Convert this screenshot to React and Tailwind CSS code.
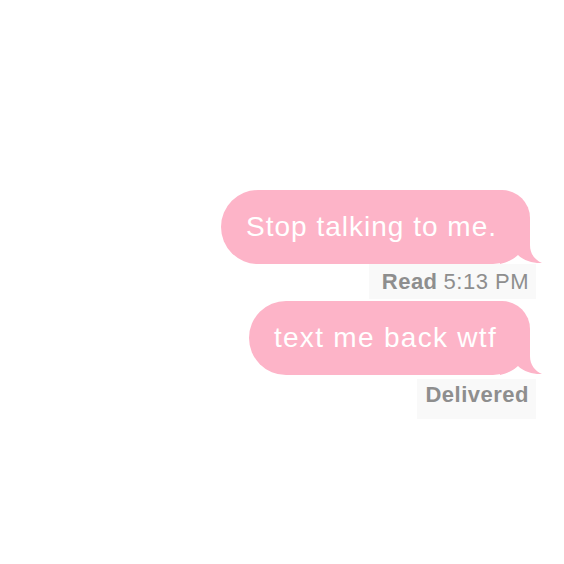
import React from "react";

const font = { fontFamily: '"Liberation Sans", Arial, sans-serif' };

function Tail() {
  return (
    <svg
      className="absolute right-[-12px] bottom-0"
      width="42"
      height="40"
      viewBox="0 0 42 40"
    >
      <path
        d="M0 3 L30 3 L30 21 C30 30 35 36 42 39 C34 39.5 24 37 18 31 C14 35 8 38 0 40 Z"
        fill="#fdb4c8"
      />
    </svg>
  );
}

function Bubble({ children, wide }) {
  return (
    <div className="relative h-[74px] flex items-center pl-[25px] pr-[33px] bg-[#fdb4c8] rounded-l-[37px] rounded-tr-[28px] rounded-br-[37px]">
      <span
        className={
          wide
            ? "text-[28px] leading-none tracking-[1.3px] text-white whitespace-nowrap"
            : "text-[28px] leading-none tracking-[1px] text-white whitespace-nowrap"
        }
      >
        {children}
      </span>
      <Tail />
    </div>
  );
}

export default function App() {
  return (
    <div className="w-[564px] h-[564px] bg-white overflow-hidden" style={font}>
      <div className="flex flex-col items-end pt-[190px] pr-[34px]">
        <Bubble>Stop talking to me.</Bubble>

        {/* Read receipt */}
        <div className="mr-[-6px] pl-[13px] pr-[7px] h-[35px] flex items-center bg-[#f9f9f9] text-[22px] leading-6 tracking-[0.5px] text-[#8e8e8e]">
          <span className="font-bold mr-[6px]">Read</span>
          <span>5:13 PM</span>
        </div>

        <div className="mt-[2px]">
          <Bubble wide>text me back wtf</Bubble>
        </div>

        <div className="mr-[-6px] mt-[4px] pl-[8px] pr-[7px] h-[40px] flex items-start pt-[4px] bg-[#f9f9f9] text-[22px] leading-6 tracking-[0.5px] text-[#8e8e8e]">
          <span className="font-bold">Delivered</span>
        </div>
      </div>
    </div>
  );
}
